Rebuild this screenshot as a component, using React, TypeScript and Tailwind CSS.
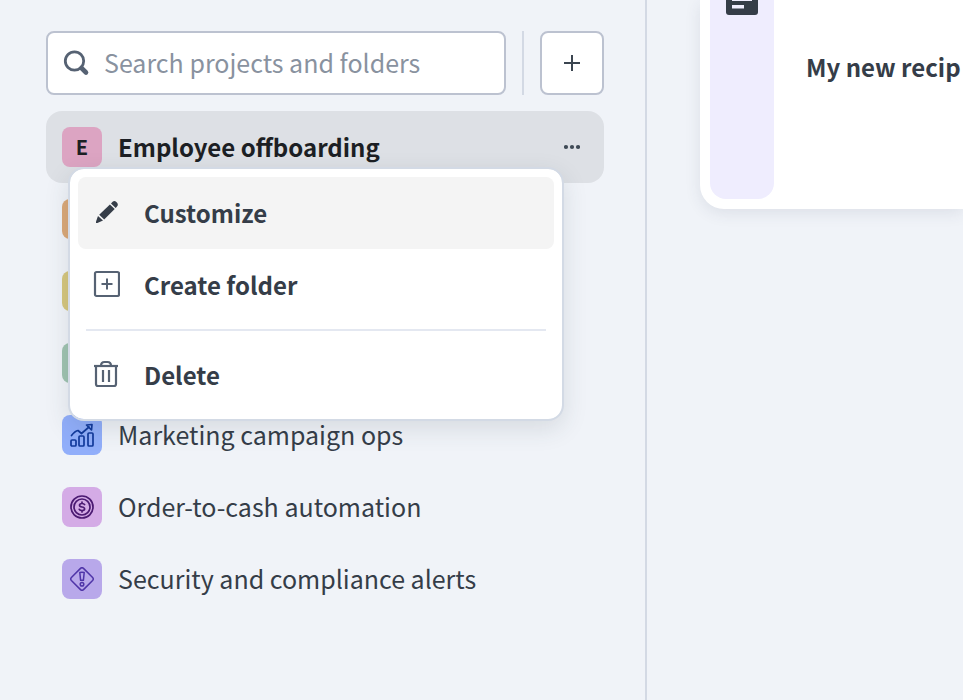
import type { ReactNode } from "react";

function SearchIcon() {
  return (
    <svg className="size-7 shrink-0" viewBox="0 0 28 28" fill="none" stroke="#566273">
      <circle cx="12.5" cy="12" r="9.2" strokeWidth="2.8" />
      <path d="M19.5 19 24 23.500" strokeWidth="4.6" strokeLinecap="round" />
    </svg>
  );
}

function PlusIcon() {
  return (
    <svg className="size-4" viewBox="0 0 16 16" stroke="#3b4550" strokeWidth="2">
      <path d="M8 0V16M0 8H16" />
    </svg>
  );
}

function DotsIcon() {
  return (
    <svg className="h-4 w-4" viewBox="0 0 16 16" fill="#3f4a56">
      <circle cx="2" cy="8" r="2.1" />
      <circle cx="8" cy="8" r="2.1" />
      <circle cx="14" cy="8" r="2.1" />
    </svg>
  );
}

function PencilIcon() {
  return (
    <svg className="size-7 shrink-0" viewBox="-1 -1 28 28" fill="#353d48">
      <path d="M18 4.400 19.600 2.800Q21 1.600 22.800 2.400 24.400 3.400 24.800 5 25 6.600 24 7.600L22.700 9Z" />
      <path d="M16.900 5.400 21.700 10.100 11.200 20.500 6.200 15.700Z" />
      <path d="M5 16.900 10 21.600 4.400 24 3 24 3 22.600Z" />
    </svg>
  );
}

function AddFolderIcon() {
  return (
    <svg className="size-7 shrink-0" viewBox="-1 0 28 28" fill="none" stroke="#566273" strokeWidth="2.200">
      <rect x="2" y="2" width="24" height="24" rx="1.500" />
      <path d="M14 8.5V19.5M8.5 14H19.5" strokeWidth="2" />
    </svg>
  );
}

function TrashIcon() {
  return (
    <svg className="size-7 shrink-0" viewBox="-1 0 28 28" fill="none" stroke="#566273" strokeWidth="2.200">
      <path d="M1 6H25" />
      <path d="M8 6C8 3 9.5 2 11.5 2H14.5C16.5 2 18 3 18 6" />
      <path d="M3 6V24Q3 26 5 26H21Q23 26 23 24V6" />
      <path d="M10 10V22M16 10V22" />
    </svg>
  );
}

function ChartIcon() {
  return (
    <svg className="size-6" viewBox="0 0 24 24" fill="none" stroke="#123a9c" strokeWidth="1.700" strokeLinejoin="round">
      <rect x="1" y="17" width="5" height="6" rx="1" />
      <rect x="9" y="13" width="5" height="10" rx="1" />
      <rect x="18" y="10" width="5" height="13" rx="1" />
      <path d="M1.500 12.500Q5 8 8 7.500L11.500 10.500 19 4" strokeLinecap="round" />
      <path d="M16.500 2 22 1.500 21.500 7Z" />
    </svg>
  );
}

function CoinIcon() {
  return (
    <svg className="size-6" viewBox="0 0 24 24" fill="none" stroke="#4b1a72" strokeWidth="1.700" strokeLinecap="round">
      <circle cx="12" cy="12" r="11" />
      <circle cx="12" cy="12" r="8" />
      <path d="M14.600 9.600Q14 8.500 12 8.500 9.500 8.500 9.500 10.300 9.500 11.700 12 12 14.600 12.300 14.600 13.900 14.600 15.500 12 15.500 9.900 15.500 9.300 14.300M12 7V8.500M12 15.500V17" />
    </svg>
  );
}

function AlertIcon() {
  return (
    <svg className="size-6" viewBox="0 0 24 24" fill="none" stroke="#4f35a8" strokeWidth="1.500" strokeLinejoin="round">
      <path d="M10.500 1.400Q12 0 13.500 1.400L22.600 10.500Q24 12 22.600 13.500L13.500 22.600Q12 24 10.500 22.600L1.400 13.500Q0 12 1.400 10.500Z" />
      <path d="M9.800 5.500Q12 4.800 14.200 5.500L13.400 13.300H10.600Z" />
      <circle cx="12" cy="17.200" r="1.800" />
    </svg>
  );
}

type Project = { id: string; name?: string; tile: string; icon?: ReactNode };

const projects: Project[] = [
  { id: "orange", tile: "bg-[#daa878]" },
  { id: "yellow", tile: "bg-[#d5c67d]" },
  { id: "green", tile: "bg-[#9fc3b0]" },
  { id: "marketing", name: "Marketing campaign ops", tile: "bg-[#91aefa]", icon: <ChartIcon /> },
  { id: "orders", name: "Order-to-cash automation", tile: "bg-[#d4abe6]", icon: <CoinIcon /> },
  { id: "security", name: "Security and compliance alerts", tile: "bg-[#b8a8ea]", icon: <AlertIcon /> },
];

function Tile({ color, children }: { color: string; children?: ReactNode }) {
  return (
    <span className={`flex size-10 shrink-0 items-center justify-center rounded-lg ${color}`}>{children}</span>
  );
}

function MenuItem({ icon, label, active }: { icon: ReactNode; label: string; active?: boolean }) {
  return (
    <button
      type="button"
      role="menuitem"
      className={`flex h-18 w-full items-center gap-6 rounded-lg px-3.5 pb-0.5 text-left text-2xl font-bold ${active ? "bg-[#f4f4f4]" : ""}`}
    >
      {icon}
      <span className="pt-0.5">{label}</span>
    </button>
  );
}

export default function App() {
  return (
    <div className="flex min-h-screen overflow-hidden bg-[#f0f3f8] font-['Noto_Sans_CJK_SC','Noto_Sans',sans-serif] text-[25px] leading-8 text-[#353d48]">
      <aside className="w-[647px] shrink-0 border-r-2 border-[#d3d9e4] pt-[31px] pr-[41px] pl-[46px]">
        <div className="flex h-16 items-stretch gap-4">
          <label className="flex min-w-0 flex-1 items-center gap-3.5 rounded-lg border-2 border-[#bcc2d0] bg-white pr-4 pl-3.5">
            <SearchIcon />
            <input
              type="text"
              aria-label="Search projects and folders"
              placeholder="Search projects and folders"
              className="h-full min-w-0 flex-1 bg-transparent pb-0.5 leading-10 outline-none placeholder:text-[#89929f]"
            />
          </label>
          <div className="w-0.5 bg-[#d3d9e4]" />
          <button
            type="button"
            aria-label="Add"
            className="flex w-16 items-center justify-center rounded-lg border-2 border-[#bcc2d0] bg-white"
          >
            <PlusIcon />
          </button>
        </div>

        <nav className="mt-4">
          <div className="relative flex h-18 items-center rounded-2xl bg-[#dde0e5] px-4">
            <button
              type="button"
              className="flex flex-1 items-center gap-4 text-left text-2xl font-bold text-[#1c1f24]"
            >
              <Tile color="bg-[#dca4c2]">
                <span className="text-xl">E</span>
              </Tile>
              <span>Employee offboarding</span>
            </button>
            <button type="button" aria-label="More actions" className="flex size-8 items-center justify-center">
              <DotsIcon />
            </button>

            <div
              role="menu"
              className="absolute top-14 right-10 left-[22px] z-10 rounded-2xl border-2 border-[#d3dae5] bg-white bg-clip-padding p-2 shadow-[0_8px_24px_rgba(50,60,70,0.13)]"
            >
              <MenuItem icon={<PencilIcon />} label="Customize" active />
              <MenuItem icon={<AddFolderIcon />} label="Create folder" />
              <div className="m-2 h-0.5 bg-[#e4e8f1]" />
              <MenuItem icon={<TrashIcon />} label="Delete" />
            </div>
          </div>

          {projects.map((project) => (
            <button key={project.id} type="button" className="flex h-18 w-full items-center gap-4 px-4 text-left">
              <Tile color={project.tile}>{project.icon}</Tile>
              {project.name && <span className="pb-0.5">{project.name}</span>}
            </button>
          ))}
        </nav>
      </aside>

      <main className="min-w-0 flex-1 pl-[53px]">
        <article className="flex h-[209px] rounded-bl-3xl bg-white pb-2.5 pl-2.5 shadow-[0_4px_16px_rgba(50,60,90,0.10)]">
          <div className="flex w-16 shrink-0 justify-center rounded-b-2xl bg-[#efedfe]">
            <svg className="h-[15px] w-8" viewBox="0 0 32 15">
              <path d="M0 0H32V12Q32 15 29 15H3Q0 15 0 12Z" fill="#353d48" />
              <path d="M6 0H26V1H6ZM6 5H18V8.500H6Z" fill="#efedfe" />
            </svg>
          </div>
          <h2 className="mt-[51px] ml-8 text-2xl leading-8 font-bold whitespace-nowrap">My new recip</h2>
        </article>
      </main>
    </div>
  );
}
